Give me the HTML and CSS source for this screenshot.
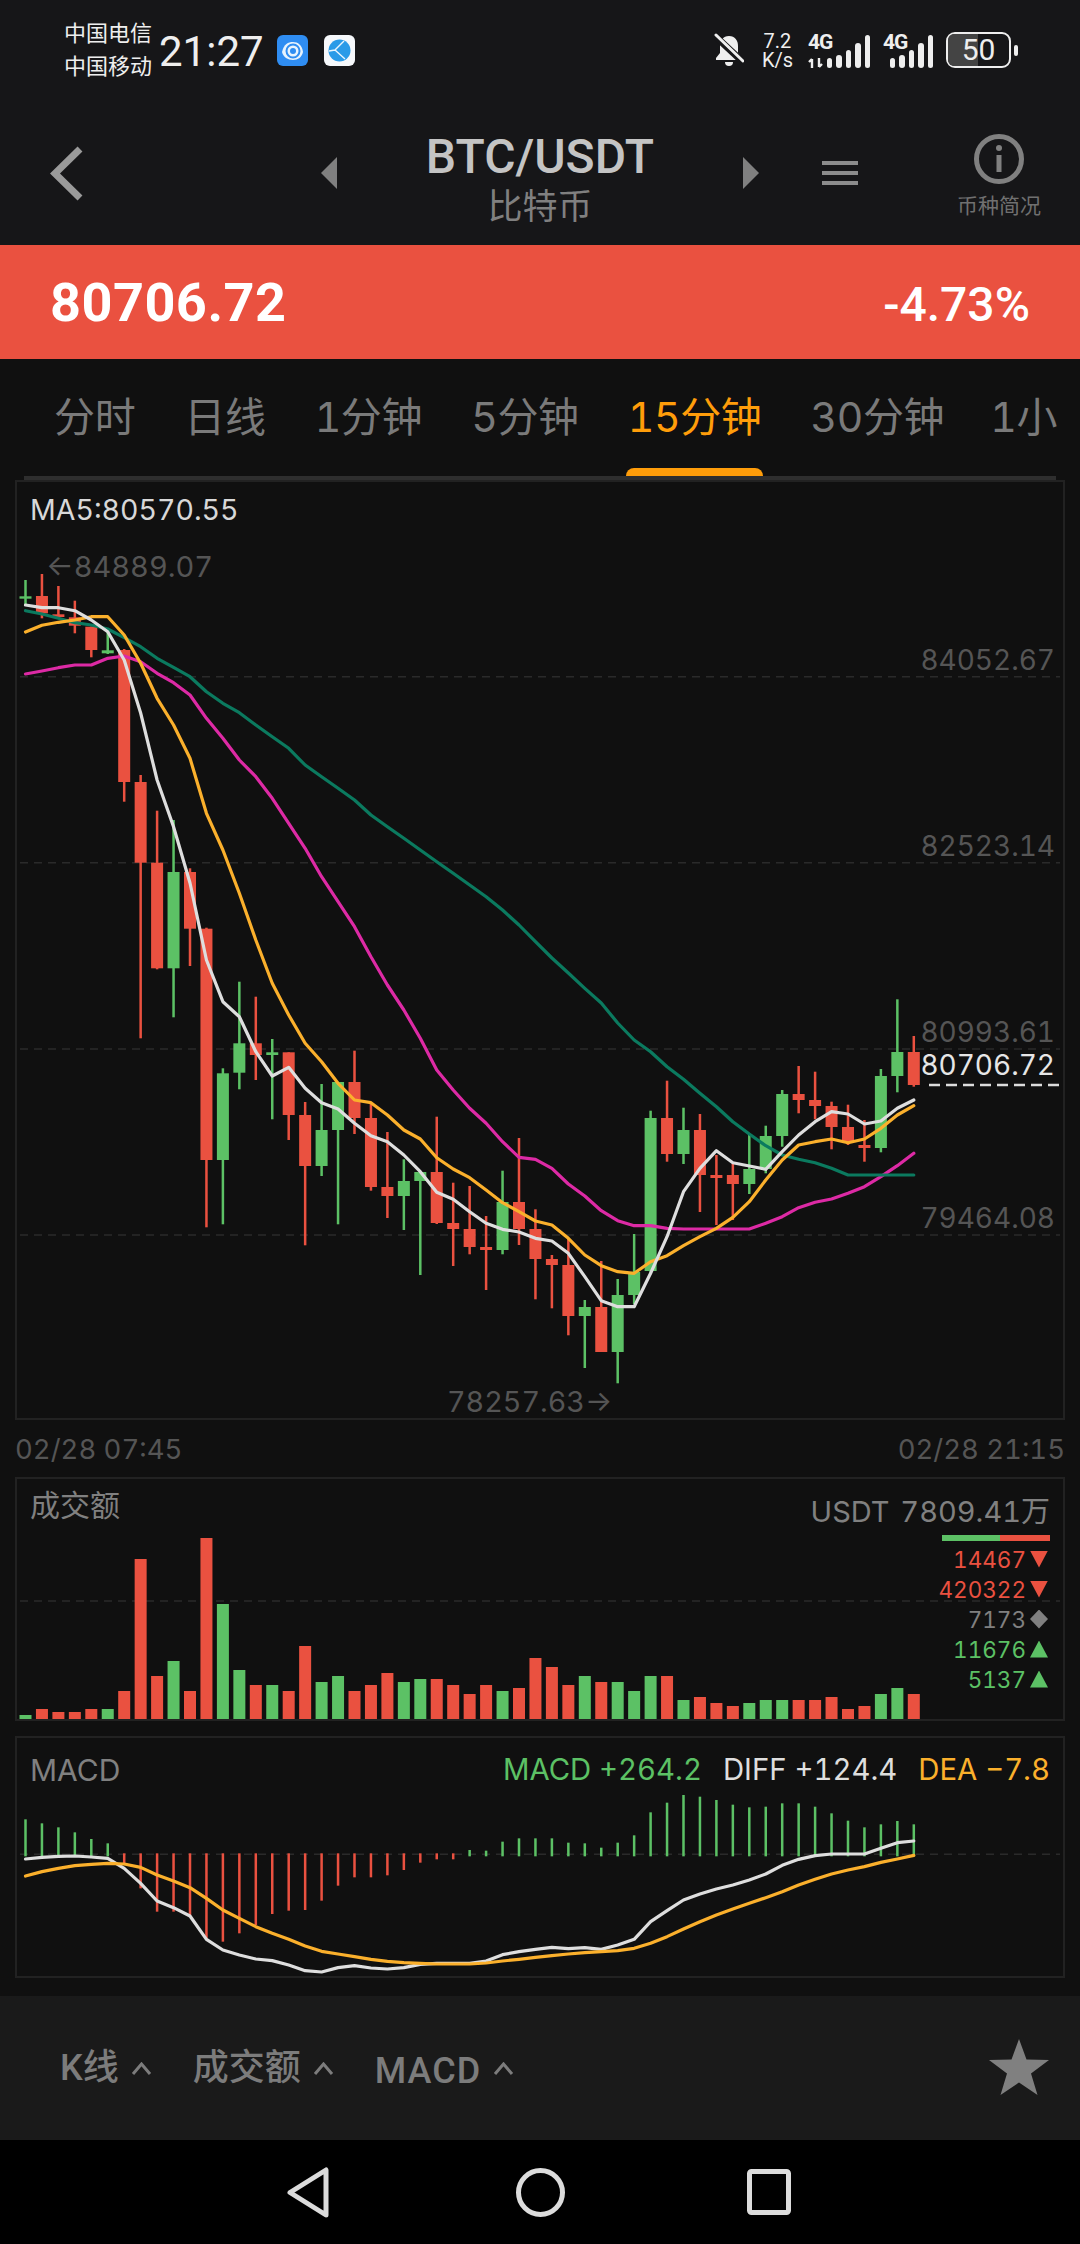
FILE: index.html
```html
<!DOCTYPE html>
<html lang="zh-CN">
<head>
    <meta charset="UTF-8">
    <meta name="viewport" content="width=device-width, initial-scale=1.0">
    <title>BTC/USDT</title>
    <link rel="stylesheet" href="styles.css">
</head>
<body>
    <div class="status-bar">
        <div class="carriers">
            <span>中国电信</span>
            <span>中国移动</span>
        </div>
        <div class="clock">21:27</div>
        <svg class="app-icon" viewBox="0 0 31 31">
            <rect width="31" height="31" rx="6" fill="#2f8df2"/>
            <path d="M5 17C7 9 11 7 16 7s9 3 10 10c-1 5-5 8-10 8S6 22 5 17z" fill="#e8f3fd"/>
            <circle cx="16" cy="16" r="6.500" fill="none" stroke="#2f8df2" stroke-width="2"/>
            <circle cx="16" cy="16" r="3" fill="#2f8df2"/>
        </svg>
        <svg class="app-icon second" viewBox="0 0 31 31">
            <rect width="31" height="31" rx="6" fill="#f6f8fb"/>
            <circle cx="15.500" cy="15.500" r="11" fill="#2a9be8"/>
            <path d="M20 6l-9 9 10 9M11 15l-6 1" fill="none" stroke="#eaf6fe" stroke-width="1.400"/>
        </svg>
        <div class="status-right">
            <svg class="bell" viewBox="0 0 30 35">
                <path d="M15 3C9 3 6 7.500 6 13v7l-4 5v2h26v-2l-4-5v-7C24 7.500 21 3 15 3z" fill="#eee"/>
                <path d="M11 29h8a4 4 0 0 1-8 0z" fill="#eee"/>
                <path d="M1 3l28 26" stroke="#161618" stroke-width="7"/>
                <path d="M2 2l27 26" stroke="#eee" stroke-width="3" stroke-linecap="round"/>
            </svg>
            <div class="speed"><span>7.2</span><span>K/s</span></div>
            <div class="signal first">
                <span class="net">4G</span>
                <svg class="updown" viewBox="0 0 15 10">
                    <path d="M4 10V1M1 4l3-3M11 0v9M14 6l-3 3" fill="none" stroke="#eee" stroke-width="2.400"/>
                </svg>
                <i class="b1"></i><i class="b2"></i><i class="b3"></i><i class="b4"></i><i class="b5"></i>
            </div>
            <div class="signal">
                <span class="net">4G</span>
                <i class="b1"></i><i class="b2"></i><i class="b3"></i><i class="b4"></i><i class="b5"></i>
            </div>
            <div class="battery">
                <div class="battery-fill"></div>
                <span>50</span>
            </div>
            <div class="battery-nub"></div>
        </div>
    </div>

    <div class="header">
        <svg class="back" viewBox="0 0 33 55">
            <path d="M30 3L5 27.500 30 52" fill="none" stroke="#9a9a9a" stroke-width="7"/>
        </svg>
        <div class="tri tri-left"></div>
        <div class="title">
            <div class="pair">BTC/USDT</div>
            <div class="coin">比特币</div>
        </div>
        <div class="tri tri-right"></div>
        <div class="menu"><i></i><i></i><i></i></div>
        <div class="info">
            <svg viewBox="0 0 50 50">
                <circle cx="25" cy="25" r="22.500" fill="none" stroke="#808080" stroke-width="5"/>
                <circle cx="25" cy="14" r="3" fill="#808080"/>
                <rect x="22.500" y="21" width="5" height="17" fill="#808080"/>
            </svg>
            <span>币种简况</span>
        </div>
    </div>

    <div class="price-band">
        <span class="last-price">80706.72</span>
        <span class="change">-4.73%</span>
    </div>

    <div class="tabs">
        <a>分时</a>
        <a>日线</a>
        <a>1分钟</a>
        <a>5分钟</a>
        <a class="active">15分钟</a>
        <a>30分钟</a>
        <a class="last">1小</a>
    </div>

    <div class="panel kline">
        <svg id="kline-chart" viewBox="17 482 1046 936"></svg>
        <span class="label ma">MA5:80570.55</span>
        <span class="label high">←84889.07</span>
        <span class="label low">78257.63→</span>
        <span class="label axis a1">84052.67</span>
        <span class="label axis a2">82523.14</span>
        <span class="label axis a3">80993.61</span>
        <span class="label axis a4">79464.08</span>
        <span class="label axis now">80706.72</span>
    </div>

    <div class="dates">
        <span>02/28 07:45</span>
        <span>02/28 21:15</span>
    </div>

    <div class="panel volume">
        <svg id="volume-chart" viewBox="17 1479 1046 240"></svg>
        <span class="label vol-title">成交额</span>
        <div class="vol-side">
            <div class="vol-total">USDT 7809.41万</div>
            <div class="ratio"><i></i><i></i></div>
            <div class="flow red">14467<b class="down"></b></div>
            <div class="flow red">420322<b class="down"></b></div>
            <div class="flow gray">7173<b class="flat"></b></div>
            <div class="flow green">11676<b class="up"></b></div>
            <div class="flow green">5137<b class="up"></b></div>
        </div>
    </div>

    <div class="panel macd">
        <svg id="macd-chart" viewBox="17 1738 1046 238"></svg>
        <div class="macd-head">
            <span class="macd-name">MACD</span>
            <div class="macd-values">
                <span class="green">MACD +264.2</span>
                <span class="white">DIFF +124.4</span>
                <span class="yellow">DEA −7.8</span>
            </div>
        </div>
    </div>

    <div class="toolbar">
        <span class="tool k">K线</span>
        <svg class="caret" viewBox="0 0 21 13"><path d="M2 12l8.500-10L19 12" /></svg>
        <span class="tool">成交额</span>
        <svg class="caret" viewBox="0 0 21 13"><path d="M2 12l8.500-10L19 12" /></svg>
        <span class="tool latin">MACD</span>
        <svg class="caret" viewBox="0 0 21 13"><path d="M2 12l8.500-10L19 12" /></svg>
        <svg class="star" viewBox="0 0 60 56">
            <polygon points="30,0 37.500,20.500 60,21 42,34.500 48.500,56 30,43.500 11.500,56 18,34.500 0,21 22.500,20.500" fill="#808080"/>
        </svg>
    </div>

    <div class="navbar">
        <svg class="nav-back" viewBox="0 0 44 51">
            <path d="M40 3v45L4 25.500z" fill="none" stroke="#dcdcdc" stroke-width="5" stroke-linejoin="round"/>
        </svg>
        <svg class="nav-home" viewBox="0 0 49 49">
            <circle cx="24.500" cy="24.500" r="22" fill="none" stroke="#dcdcdc" stroke-width="5"/>
        </svg>
        <svg class="nav-recent" viewBox="0 0 44 46">
            <rect x="2.500" y="2.500" width="39" height="41" rx="2" fill="none" stroke="#dcdcdc" stroke-width="5"/>
        </svg>
    </div>

    <script src="script.js"></script>
</body>
</html>
```
FILE: styles.css
```css
* {
    box-sizing: border-box;
}
body {
    margin: 0;
    width: 1080px;
    height: 2244px;
    overflow: hidden;
    background-color: #101010;
    color: #808080;
    font-family: Inter, "Noto Sans CJK SC", sans-serif;
    font-variant-numeric: tabular-nums;
}

/* status bar */
.status-bar {
    height: 100px;
    background-color: #161618;
    color: #eee;
    display: flex;
    align-items: flex-start;
    padding: 24px 62px 0 64px;
    font-family: Roboto, "Noto Sans CJK SC", sans-serif;
}
.carriers {
    display: flex;
    flex-direction: column;
    font-size: 22px;
    line-height: 33px;
    margin-top: -7px;
    width: 95px;
}
.clock {
    font-size: 42px;
    line-height: 50px;
    width: 118px;
    margin-top: 3px;
}
.app-icon {
    width: 31px;
    height: 31px;
    margin-top: 11px;
}
.app-icon.second {
    margin-left: 16px;
}
.status-right {
    margin-left: auto;
    display: flex;
    align-items: flex-start;
}
.bell {
    width: 30px;
    height: 35px;
    margin-top: 9px;
}
.speed {
    margin-left: 17px;
    width: 33px;
    display: flex;
    flex-direction: column;
    align-items: center;
    font-size: 20px;
    line-height: 19px;
    margin-top: 8px;
}
.signal {
    position: relative;
    display: flex;
    justify-content: flex-end;
    align-items: flex-end;
    gap: 4px;
    width: 50px;
    height: 34px;
    margin-top: 10px;
    margin-left: 13px;
}
.signal.first {
    width: 62px;
    margin-left: 14px;
}
.signal i {
    display: block;
    width: 5.500px;
    background-color: #eee;
    border-radius: 3px;
}
.signal .b1 { height: 10px; }
.signal .b2 { height: 13px; }
.signal .b3 { height: 18px; }
.signal .b4 { height: 25px; }
.signal .b5 { height: 33px; }
.net {
    position: absolute;
    left: 0;
    top: -2px;
    font-size: 21px;
    line-height: 20px;
    font-weight: 700;
    letter-spacing: -1px;
}
.updown {
    position: absolute;
    left: 0;
    bottom: 0;
    width: 15px;
    height: 10px;
}
.battery {
    position: relative;
    width: 65px;
    height: 36px;
    margin-left: 13px;
    margin-top: 8px;
    border: 2.500px solid #eee;
    border-radius: 9px;
    text-align: center;
    font-size: 30px;
    line-height: 31px;
}
.battery span {
    position: relative;
}
.battery-fill {
    position: absolute;
    left: 0;
    top: 0;
    bottom: 0;
    width: 30px;
    background-color: #444;
    border-radius: 6px 0 0 6px;
}
.battery-nub {
    width: 4px;
    height: 11px;
    margin-left: 3px;
    margin-top: 21px;
    border-radius: 2px;
    background-color: #eee;
}

/* header */
.header {
    height: 145px;
    background-color: #161618;
    display: flex;
    align-items: flex-start;
    padding-left: 50px;
}
.back {
    width: 33px;
    height: 55px;
    margin-top: 46px;
}
.tri {
    width: 16px;
    height: 32px;
    margin-top: 57px;
    background-color: #808080;
}
.tri-left {
    margin-left: 238px;
    clip-path: polygon(100% 0, 100% 100%, 0 50%);
}
.tri-right {
    clip-path: polygon(0 0, 0 100%, 100% 50%);
}
.title {
    width: 406px;
    text-align: center;
    margin-top: 32px;
}
.pair {
    font-family: Roboto, sans-serif;
    font-size: 48px;
    font-weight: 500;
    line-height: 50px;
    color: #c4c4c4;
}
.coin {
    font-size: 35px;
    line-height: 44px;
    margin-top: 2px;
    color: #808080;
}
.menu {
    margin-left: 63px;
    margin-top: 61px;
    width: 36px;
    display: flex;
    flex-direction: column;
    gap: 6px;
}
.menu i {
    display: block;
    height: 4px;
    background-color: #8c8c8c;
}
.info {
    margin-left: 99px;
    width: 84px;
    display: flex;
    flex-direction: column;
    align-items: center;
    margin-top: 34px;
    color: #707070;
    font-size: 21px;
    line-height: 28px;
}
.info svg {
    width: 50px;
    height: 50px;
    margin-bottom: 8px;
}
.info span {
    white-space: nowrap;
}

/* price */
.price-band {
    height: 114px;
    background-color: #ea5140;
    color: #fff;
    display: flex;
    justify-content: space-between;
    align-items: center;
    padding: 0 50px;
    font-family: Roboto, sans-serif;
}
.last-price {
    font-size: 54px;
    font-weight: 700;
    letter-spacing: 0.500px;
}
.change {
    font-size: 48px;
    font-weight: 500;
    margin-top: 4px;
}

/* tabs */
.tabs {
    height: 121px;
    margin: 0 24px;
    padding: 36px 0 0 30px;
    display: flex;
    gap: 49px;
    border-bottom: 4px solid #2e2e2e;
    font-size: 41px;
    letter-spacing: -0.350px;
    line-height: 44px;
    color: #7a7a7a;
}
.tabs a {
    position: relative;
    white-space: nowrap;
    flex: none;
    height: 81px;
}
.tabs a.last {
    margin-left: -3px;
}
.tabs a.active {
    color: #ff9d0a;
}
.tabs a.active::after {
    content: "";
    position: absolute;
    left: -2px;
    right: -1px;
    bottom: 0;
    height: 8px;
    background-color: #ff9d0a;
    border-radius: 8px 8px 0 0;
}

/* chart panels */
.panel {
    position: relative;
    margin: 0 15px;
    border: 2px solid #222;
}
.panel svg {
    display: block;
    width: 100%;
    height: 100%;
}
.kline {
    height: 940px;
}
.volume {
    height: 244px;
}
.macd {
    height: 242px;
    margin-top: 15px;
}
.label {
    position: absolute;
    white-space: nowrap;
    font-size: 28px;
    line-height: 34px;
}
.ma {
    left: 13px;
    top: 11px;
    font-size: 28.500px;
    color: #d8d8d8;
}
.high {
    left: 29px;
    top: 68px;
    font-size: 29px;
    color: #555;
}
.low {
    left: 430px;
    top: 903px;
    font-size: 28.700px;
    color: #555;
}
.axis {
    right: 8px;
    color: #555;
}
.a1 { top: 161px; }
.a2 { top: 347px; }
.a3 { top: 533px; }
.a4 { top: 719px; }
.now {
    top: 566px;
    color: #e6e6e6;
}
.dates {
    height: 57px;
    margin: 0 15px;
    display: flex;
    justify-content: space-between;
    align-items: center;
    font-size: 27.500px;
    color: #555;
}
.vol-title {
    left: 13px;
    top: 9px;
    font-size: 30px;
}
.vol-side {
    position: absolute;
    right: 13px;
    top: 16px;
    display: flex;
    flex-direction: column;
    align-items: flex-end;
}
.vol-total {
    font-size: 29px;
    line-height: 34px;
    word-spacing: 3px;
    white-space: nowrap;
}
.ratio {
    display: flex;
    width: 108px;
    height: 6px;
    margin: 6px 0 3px 0;
}
.ratio i:first-child {
    width: 58px;
    background-color: #5cc165;
}
.ratio i:last-child {
    flex: 1;
    background-color: #ea5140;
}
.flow {
    display: flex;
    align-items: center;
    gap: 4px;
    height: 30px;
    margin-right: 2px;
    font-size: 22.500px;
}
.flow b {
    display: block;
    width: 18px;
    height: 17px;
    background-color: currentColor;
}
.flow .down { clip-path: polygon(0 0, 100% 0, 50% 100%); }
.flow .up { clip-path: polygon(50% 0, 100% 100%, 0 100%); }
.flow .flat { clip-path: polygon(50% 0, 100% 50%, 50% 100%, 0 50%); height: 19px; }
.red { color: #ea5140; }
.green { color: #5cc165; }
.gray { color: #808080; }
.white { color: #dedede; }
.yellow { color: #fbb02c; }
.macd-head {
    position: absolute;
    left: 13px;
    right: 13px;
    top: 15px;
    display: flex;
    justify-content: space-between;
    font-size: 29.300px;
    line-height: 34px;
}
.macd-name {
    font-size: 30px;
}
.macd-values {
    display: flex;
    gap: 21px;
}

/* bottom */
.toolbar {
    height: 144px;
    margin-top: 18px;
    background-color: #1a1a1a;
    display: flex;
    align-items: center;
    padding: 0 31px 0 60px;
    font-family: Roboto, "Noto Sans CJK SC", sans-serif;
    color: #7c7c7c;
}
.tool {
    font-size: 36px;
    font-weight: 500;
    line-height: 46px;
    white-space: nowrap;
}
.tool.latin {
    margin-top: 5px;
    letter-spacing: 1px;
}
.caret {
    width: 21px;
    height: 13px;
    margin: 0 41px 0 12px;
}
.caret path {
    fill: none;
    stroke: #7c7c7c;
    stroke-width: 3;
}
.star {
    width: 60px;
    height: 56px;
    margin-left: auto;
    margin-top: -2px;
}
.navbar {
    height: 104px;
    background-color: #000;
    display: flex;
    align-items: center;
    padding: 0 0 0 286px;
}
.nav-back {
    width: 44px;
    height: 51px;
}
.nav-home {
    width: 49px;
    height: 49px;
    margin-left: 186px;
}
.nav-recent {
    width: 44px;
    height: 46px;
    margin-left: 182px;
}

/* svg charts */
.grid {
    stroke: #2a2a2a;
    stroke-width: 1.500;
    stroke-dasharray: 8 6;
}
.now-line {
    stroke: #dcdcdc;
    stroke-width: 2.500;
    stroke-dasharray: 11 6;
}
.up-bar { fill: #5cc165; }
.down-bar { fill: #ea5140; }
.line {
    fill: none;
    stroke-width: 3.200;
    stroke-linejoin: round;
    stroke-linecap: round;
}
.line-white { stroke: #dedede; }
.line-yellow { stroke: #fbb02c; }
.line-teal { stroke: #0b7a5f; }
.line-pink { stroke: #dd2aa5; }
```
FILE: script.js
```js
const NS = 'http://www.w3.org/2000/svg';
const barX = i => 25.5 + 16.45 * i;

function add(svg, tag, attrs) {
    const el = document.createElementNS(NS, tag);
    for (const k in attrs) el.setAttribute(k, attrs[k]);
    svg.appendChild(el);
    return el;
}

function addGrid(svg, y) {
    add(svg, 'line', { x1: 20, x2: 1060, y1: y, y2: y, class: 'grid' });
}

function addLine(svg, ys, cls) {
    const points = ys.map((y, i) => barX(i) + ',' + y).join(' ');
    add(svg, 'polyline', { points, class: 'line ' + cls });
}

// g = green, r = red: [colour, wick top, body top, body bottom, wick bottom]
const candles = [
    ['g',580,596.3,598.7,605],['r',574,596,613.3,618.3],['r',586,614.3,617,618.3],['r',600.7,617.3,625.7,633.3],
    ['r',626.7,626.7,650,657.3],['g',631.7,650.3,653.3,654],['r',649,650,782,801.7],['r',775,782,862.7,1038.3],
    ['r',810.7,862.7,968.3,969.3],['g',820,872,968.3,1017.3],['r',868.3,872,928.7,966],['r',927.7,928.7,1160,1227.3],
    ['g',1068.3,1073.3,1160,1224.3],['g',981.7,1043.3,1072.7,1089.3],['r',996.7,1043.3,1055,1080],['g',1039,1052.3,1055,1119.3],
    ['r',1052.3,1052.3,1115,1140],['r',1102,1115,1166,1245.3],['g',1084,1130,1166,1176],['g',1082,1082,1130,1224.3],
    ['r',1050.7,1082,1118,1134],['r',1103.3,1118,1187,1190.7],['r',1132,1187,1196,1218],['g',1159.3,1181,1196,1230],
    ['g',1172,1172,1181,1275],['r',1116.7,1172,1223,1224],['r',1182.7,1223,1229,1266],['r',1186,1229,1247,1254.3],
    ['r',1216,1247,1250,1290],['g',1170.7,1202,1250,1254.3],['r',1138,1202,1229,1245],['r',1209.3,1229,1259,1299.3],
    ['r',1255,1259,1265,1308.3],['r',1238.7,1265,1316,1335.3],['g',1300,1307,1316,1368],['r',1261,1307,1352,1352],
    ['g',1279,1295,1352,1383.3],['g',1234,1272,1295,1304],['g',1110.7,1118,1271,1272],['r',1080.7,1118,1154,1161.7],
    ['g',1107.7,1130,1154,1164],['r',1114,1130,1175,1212],['r',1155,1175,1178,1225],['r',1164,1175,1184,1220],
    ['g',1135,1169,1184,1194],['g',1125.7,1136,1169,1173.3],['g',1090,1094,1136,1146.7],['r',1066,1094,1100,1113.3],
    ['r',1071.7,1100,1106,1119.3],['r',1101.7,1106,1127,1149.3],['r',1104.7,1127,1142,1145],['r',1120,1145,1148,1161.7],
    ['g',1069,1076,1148,1152.3],['g',999.3,1052,1076,1092.3],['r',1036,1052,1085,1086.7]
];

const maWhite = [605,607.7,607.7,610.7,620,631.7,660,713,780,826.7,883,960,1001.7,1016.7,1051.7,1076,1067.3,1088.3,1102.7,1109,
    1123.3,1135.7,1141.7,1155,1171.7,1192.3,1199.3,1211.7,1223.3,1229.3,1232,1238.3,1241,1253.3,1276.7,1300.7,1306.7,1306.7,
    1273.3,1236.7,1191.7,1168.3,1150.7,1162.7,1166,1169.3,1151.7,1135,1121.7,1111.7,1114,1124,1121,1108.3,1100];
const maYellow = [632,625.3,622.3,620,616.7,616.7,635,663.3,698.3,725,758.3,813.3,850,893.3,940,983.3,1015,1043.3,1061.7,1083.3,
    1100,1102.7,1115,1130,1139,1157.7,1169,1177.7,1190,1202.7,1211.7,1221,1225,1238.3,1255,1265.7,1271.7,1273.3,1261.7,1255.7,
    1245.7,1236.7,1228.3,1217.3,1201.7,1180,1160,1145,1141.7,1139,1142.7,1139,1128.3,1115,1105.7];
const maTeal = [610.7,614,618.3,622.7,625,629,637.7,646.7,658.3,667.3,676.7,691.7,703.3,712.7,725,736.7,748.3,765,776.7,788.3,
    800,815,826.7,838.3,850,861.7,873.3,885,896.7,910,925,941.7,958,973,988.3,1003,1023,1040,1051.7,1066.7,1079.3,1093.3,
    1106.7,1121.7,1134,1145.7,1155,1159.3,1162.7,1168.3,1175,1175,1175,1175,1175];
const maPink = [674,671,667.7,665,665,658.3,656,661.7,673.3,682.7,695,718.3,738.3,760,776.7,798.3,823.3,848.3,876.7,901.7,926.7,
    956.7,985,1010,1038.3,1070,1090,1108.3,1123.3,1141.7,1157.3,1159.3,1168.3,1184,1196,1210.7,1220.7,1225.7,1225.7,1228.3,
    1229,1229,1229,1229,1229,1223.3,1216.7,1207.7,1202.3,1199,1193.3,1186.7,1176.7,1165.7,1153.3];

// tops of the volume bars, in thirds of a pixel below y=1460
const volumeTops = [765,747,756,756,747,747,693,297,648,603,693,234,432,630,675,675,693,558,666,648,693,675,639,666,657,657,675,
    702,675,693,684,594,621,675,648,666,666,693,648,648,720,711,729,738,729,720,720,720,720,711,747,738,702,684,702];
const volumeY = v => 1460 + v / 3;

// macd values, thirds of a pixel below y=1730
const macdY = v => 1730 + v / 3;
const histogram = [268,280,292,307,327,340,400,475,545,545,555,625,635,610,585,552,542,540,512,467,442,442,436,420,398,388,388,
    360,362,335,325,325,325,338,340,353,338,316,247,218,195,200,210,224,232,230,220,220,230,250,272,292,283,273,283];
const diff = [387,382,379,378,381,385,415,460,513,533,558,628,660,675,687,692,705,722,726,713,707,714,717,713,703,700,700,700,693,
    674,665,658,652,656,653,658,645,628,575,542,510,492,477,465,450,432,406,388,377,372,372,372,355,338,333];
const dea = [438,425,415,407,403,400,402,412,435,453,473,505,540,565,590,610,628,648,664,672,680,688,694,698,700,702,702,702,699,
    693,688,682,677,672,668,665,662,655,640,620,597,575,555,537,520,503,485,465,448,432,420,410,397,387,376];

function drawKline() {
    const svg = document.getElementById('kline-chart');
    [676.7, 862.7, 1049, 1235].forEach(y => addGrid(svg, y));
    candles.forEach((c, i) => {
        const cls = c[0] === 'g' ? 'up-bar' : 'down-bar';
        const x = barX(i);
        add(svg, 'rect', { x: x - 1.25, y: c[1], width: 2.5, height: c[4] - c[1], class: cls });
        add(svg, 'rect', { x: x - 6, y: c[2], width: 12, height: c[3] - c[2], class: cls });
    });
    addLine(svg, maPink, 'line-pink');
    addLine(svg, maTeal, 'line-teal');
    addLine(svg, maYellow, 'line-yellow');
    addLine(svg, maWhite, 'line-white');
    add(svg, 'line', { x1: 929, x2: 1063, y1: 1085, y2: 1085, class: 'now-line' });
}

function drawVolume() {
    const svg = document.getElementById('volume-chart');
    addGrid(svg, 1601);
    volumeTops.forEach((top, i) => {
        const y = volumeY(top);
        add(svg, 'rect', {
            x: barX(i) - 6, y, width: 12, height: 1719.3 - y,
            class: candles[i][0] === 'g' ? 'up-bar' : 'down-bar'
        });
    });
}

function drawMacd() {
    const svg = document.getElementById('macd-chart');
    addGrid(svg, 1854.3);
    histogram.forEach((v, i) => {
        const red = i >= 6 && i <= 26;
        const y1 = macdY(red ? 370 : v);
        const y2 = macdY(red ? v : 379);
        add(svg, 'rect', { x: barX(i) - 1.25, y: y1, width: 2.5, height: y2 - y1, class: red ? 'down-bar' : 'up-bar' });
    });
    addLine(svg, diff.map(macdY), 'line-white');
    addLine(svg, dea.map(macdY), 'line-yellow');
}

drawKline();
drawVolume();
drawMacd();
```
